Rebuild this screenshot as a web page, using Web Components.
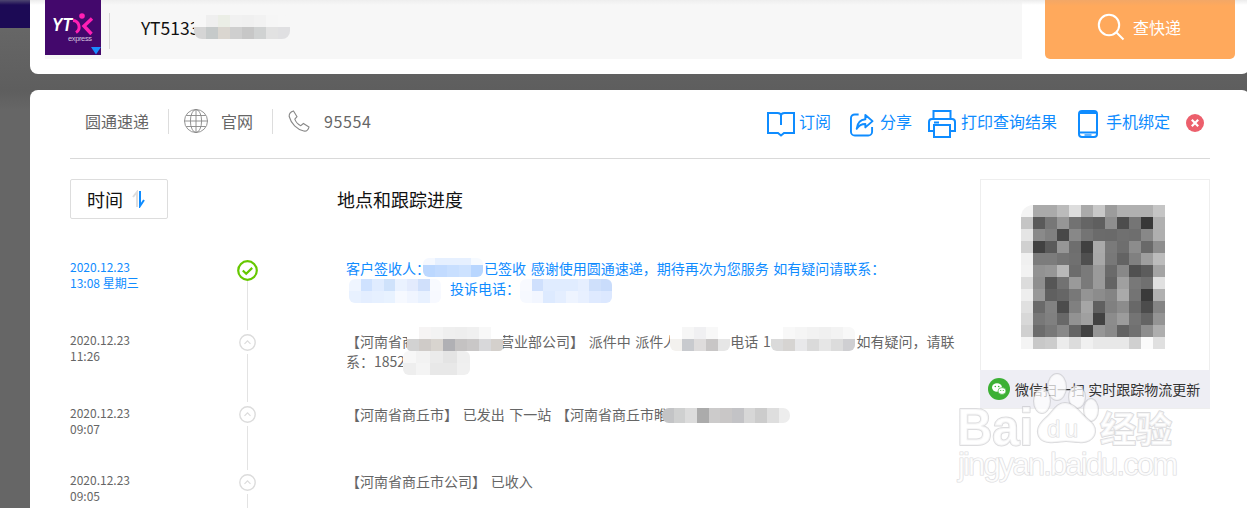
<!doctype html>
<html lang="zh">
<head>
<meta charset="utf-8">
<title>查快递</title>
<style>
  html, body { margin: 0; padding: 0; height: 100%; overflow: hidden; background: #666; }
</style>
</head>
<body>
<yt-app></yt-app>
<script>
const font = `"Noto Sans CJK SC", "Noto Sans", sans-serif`;
const BLUE = "#0f8cff";

class Blur extends HTMLElement {
  constructor() {
    super();
    this.attachShadow({ mode: "open" });
  }

  connectedCallback() {
    const cols = +this.getAttribute("cols");
    const cell = this.getAttribute("cell") || 12;
    const rows = (this.getAttribute("rows") || "12").split(",").map((r) => r + "px").join(" ");
    const cells = this.getAttribute("colors").trim().split(/[\s,]+/)
      .map((c) => `<i style="background:${c}"></i>`).join("");
    this.shadowRoot.innerHTML = `
      <style>
        :host {
          display: inline-block;
          position: relative;
          width: ${this.getAttribute("w") || 0}px;
          height: 0;
          z-index: 1;
        }
        div {
          position: absolute;
          left: ${this.getAttribute("x") || 0}px;
          top: ${this.getAttribute("y") || 0}px;
          display: grid;
          grid-template-columns: repeat(${cols}, ${cell}px);
          grid-template-rows: ${rows};
          border-radius: ${this.getAttribute("r") || 6}px;
          overflow: hidden;
        }
        i { display: block; }
      </style>
      <div>${cells}</div>
    `;
  }
}

class Search extends HTMLElement {
  constructor() {
    super();
    this.attachShadow({ mode: "open" });
    this.shadowRoot.innerHTML = `
      <style>
        :host {
          display: flex;
          box-sizing: border-box;
          height: 74px;
          padding: 0 15px 15px 15px;
          gap: 23px;
          border-radius: 0 0 8px 8px;
          background: linear-gradient(#ececec, #fff 5px);
          font-family: ${font};
        }
        .field {
          flex: 1;
          display: flex;
          height: 59px;
          background: linear-gradient(#eee, #f7f7f7 5px);
        }
        .logo { width: 56px; height: 55px; flex: none; display: block; }
        .sep { width: 1px; height: 36px; margin: 13px 0 0 8px; background: #d8d8d8; }
        .code {
          margin: 15px 0 0 31px;
          font-size: 17.5px;
          line-height: 25px;
          color: #111;
          white-space: nowrap;
        }
        button {
          all: unset;
          display: flex;
          align-items: center;
          justify-content: center;
          gap: 8px;
          box-sizing: border-box;
          width: 190px;
          height: 59px;
          padding: 0 2px 5px 0;
          border-radius: 0 0 5px 5px;
          background: linear-gradient(#f3a766, #ffa95c 6px);
          color: #fff;
          font-size: 16px;
        }
      </style>
      <div class="field">
        <svg class="logo" viewBox="0 0 56 55">
          <rect width="56" height="55" fill="#43086c"/>
          <text x="7" y="31" font-family="Liberation Sans" font-size="18" font-weight="700" font-style="italic" fill="#fff" textLength="20" lengthAdjust="spacingAndGlyphs">YT</text>
          <circle cx="37" cy="16" r="2.800" fill="#ff1fb4"/>
          <path d="M28 20.500a6.500 6.500 0 0 1 3 12" fill="none" stroke="#ff1fb4" stroke-width="3"/>
          <path d="M47 18.500l-8 7.500 7.500 8" fill="none" stroke="#ff1fb4" stroke-width="3.400"/>
          <text x="23" y="40.500" font-family="Liberation Sans" font-size="7.500" fill="#d5c4de" textLength="24">express</text>
          <path d="M46 47h10l-5 7.500z" fill="#1a8cff"/>
        </svg>
        <span class="sep"></span>
        <span class="code">YT5133<yt-blur cols="8" w="0" x="-5" y="-20" rows="12,12" r="8" colors="
          #f7f7f7 #efefef #ebeee6 #f1f1f1 #f0f0f0 #f2f2f2 #f6f6f6 #f7f7f7
          #d5d5d5 #c6caca #dad6d0 #cfcfcf #c7c7c7 #d0d2d2 #e2e2e2 #e0e0e2"></yt-blur></span>
      </div>
      <button>
        <svg width="28" height="28" viewBox="0 0 28 28" fill="none" stroke="#fff" stroke-width="2">
          <circle cx="12" cy="12" r="10.200"/>
          <path d="M19.500 19.500l7 7"/>
        </svg>
        <span>查快递</span>
      </button>
    `;
  }
}

class Action extends HTMLElement {
  constructor() {
    super();
    this.attachShadow({ mode: "open" });
    this.shadowRoot.innerHTML = `
      <style>
        :host {
          display: inline-flex;
          align-items: center;
          gap: var(--gap, 5px);
          margin-left: var(--before, 18px);
          color: ${BLUE};
          font-size: 16px;
          white-space: nowrap;
        }
        slot:not([name]) { display: block; margin-bottom: 4px; }
        ::slotted(svg) { display: block; margin-top: 2px; }
      </style>
      <slot name="icon"></slot><slot></slot>
    `;
  }
}

class Toolbar extends HTMLElement {
  constructor() {
    super();
    this.attachShadow({ mode: "open" });
    this.shadowRoot.innerHTML = `
      <style>
        :host {
          display: flex;
          align-items: center;
          box-sizing: border-box;
          height: 69px;
          padding: 0 6px 6px 15px;
          border-bottom: 1px solid #d9d9d9;
          color: #666;
          font-size: 16px;
          font-family: ${font};
        }
        .sep { width: 1px; height: 25px; background: #ddd; margin: 0 15px 0 19px; }
        svg { display: block; flex: none; }
        .site { margin-left: 13px; }
        .tel { margin-left: 14px; letter-spacing: .6px; }
        .actions { margin: 4px 0 0 auto; display: flex; align-items: center; }
        .close { margin-left: 16px; }
      </style>
      <span>圆通速递</span>
      <span class="sep"></span>
      <svg width="24" height="24" viewBox="0 0 24 24" fill="none" stroke="#888" stroke-width=".9">
        <circle cx="12" cy="12" r="11.500"/>
        <ellipse cx="12" cy="12" rx="5.600" ry="11.500"/>
        <path d="M12 .5v23M.5 12h23M2.200 6.500h19.600M2.200 17.500h19.600"/>
      </svg>
      <span class="site">官网</span>
      <span class="sep"></span>
      <svg width="22" height="22" viewBox="0 0 22 22" fill="none" stroke="#888" stroke-width="1.100">
        <path d="M5.500 1L9 6.600 6.800 9.200c1 3 3 5.200 6 6.500l2.600-2.200 5.600 3.600c-.8 2.700-2.800 4.400-5.200 3.900C9 19.400 3 13.500 1.200 6.500 1 4 2.800 1.800 5.500 1z"/>
      </svg>
      <span class="tel">95554</span>
      <div class="actions">
        <yt-action style="--gap:4px;--before:0">
          <svg slot="icon" width="28" height="26" viewBox="0 0 28 26" fill="none" stroke="${BLUE}" stroke-width="2">
            <path d="M1 2h9.500C12.500 2 14 2.800 14 4.500 14 2.800 15.500 2 17.500 2H27v20H17l-3 2.500L11 22H1z"/>
            <path d="M14 2v12"/>
          </svg>
          订阅
        </yt-action>
        <yt-action style="--gap:6px;--before:19px">
          <svg slot="icon" width="24" height="25" viewBox="0 0 25 25" fill="none" stroke="${BLUE}" stroke-width="2">
            <path d="M9 2H5a4 4 0 0 0-4 4v14a4 4 0 0 0 4 4h14a4 4 0 0 0 4-4v-5"/>
            <path d="M16 2.500l7.500 6.500-7.500 6.500V12c-4 0-7 1.800-9 5 .5-5.500 3.800-9.500 9-10z" stroke-linejoin="round"/>
          </svg>
          分享
        </yt-action>
        <yt-action style="--gap:5px;--before:16px">
          <svg slot="icon" width="28" height="28" viewBox="0 0 28 28" fill="none" stroke="${BLUE}" stroke-width="2">
            <path d="M5.500 9V1h17v8"/>
            <path d="M6 21H1v-9a3 3 0 0 1 3-3h20a3 3 0 0 1 3 3v9h-5"/>
            <rect x="6" y="15" width="16" height="12"/>
            <path d="M6 12.500h5"/>
          </svg>
          打印查询结果
        </yt-action>
        <yt-action style="--gap:8px;--before:21px">
          <svg slot="icon" width="20" height="28" viewBox="0 0 20 28" fill="none" stroke="${BLUE}" stroke-width="2">
            <rect x="1" y="1" width="18" height="26" rx="3"/>
            <path d="M1 2.500h18" stroke-width="3"/>
            <path d="M1 22.500h18"/>
            <path d="M6.500 25h7" stroke-width="1.300"/>
          </svg>
          手机绑定
        </yt-action>
        <svg class="close" width="18" height="18" viewBox="0 0 18 18">
          <circle cx="9" cy="9" r="9" fill="#ec5f6c"/>
          <path d="M5.800 5.800l6.400 6.400M12.200 5.800l-6.400 6.400" stroke="#fff" stroke-width="2.200"/>
        </svg>
      </div>
    `;
  }
}

class Step extends HTMLElement {
  constructor() {
    super();
    this.attachShadow({ mode: "open" });
  }

  connectedCallback() {
    const active = this.hasAttribute("active");
    const icon = active
      ? `<svg width="21" height="21" viewBox="0 0 21 21" fill="none" stroke="#66c800">
           <circle cx="10.500" cy="10.500" r="9.300" stroke-width="2.200"/>
           <path d="M5.800 10.500l3.400 3.200 6-5.800" stroke-width="2.200"/>
         </svg>`
      : `<svg width="17" height="17" viewBox="0 0 17 17" fill="none" stroke="#dcdcdc">
           <circle cx="8.500" cy="8.500" r="7.700" stroke-width="1.400"/>
           <path d="M5.500 9.800l3-3 3 3" stroke-width="1.200"/>
         </svg>`;
    this.shadowRoot.innerHTML = `
      <style>
        :host {
          display: grid;
          grid-template-columns: 168px 20px 698px;
          height: var(--h, 72px);
          color: #666;
          font-size: 12px;
          line-height: 16px;
        }
        :host([active]) { color: ${BLUE}; }
        .when { margin-top: var(--up, -2px); white-space: pre-line; }
        .node { display: flex; flex-direction: column; align-items: center; }
        .node svg { display: block; flex: none; margin-right: 1px; }
        .node i { flex: 1; width: 1px; margin: 3px 1px 4px 0; background: #e3e3e3; }
        :host([active]) .node i { margin: 0 1px 4px 0; }
        .text {
          margin: calc(var(--up, -2px) - 1px) 0 0 88px;
          font-size: 14px;
          line-height: 20px;
          word-spacing: 1.500px;
          white-space: nowrap;
        }
      </style>
      <div class="when">${this.getAttribute("date")}\n${this.getAttribute("time")}</div>
      <div class="node">${icon}<i></i></div>
      <div class="text"><slot></slot></div>
    `;
  }
}

class Qr extends HTMLElement {
  constructor() {
    super();
    this.attachShadow({ mode: "open" });
    this.shadowRoot.innerHTML = `
      <style>
        :host {
          display: block;
          box-sizing: border-box;
          width: 230px;
          height: 230px;
          border: 1px solid #eee;
          font-family: ${font};
        }
        .code { height: 190px; padding: 25px 0 0 40px; box-sizing: border-box; }
        .code slot { display: block; }
        .foot {
          display: flex;
          align-items: center;
          gap: 5px;
          height: 38px;
          padding-left: 8px;
          margin: 0 -1px -1px;
          background: #eeeef4;
          color: #333;
          font-size: 14px;
          white-space: nowrap;
        }
        svg { display: block; flex: none; }
      </style>
      <div class="code"><slot></slot></div>
      <div class="foot">
        <svg width="22" height="22" viewBox="0 0 22 22">
          <circle cx="11" cy="11" r="11" fill="#3cb034"/>
          <ellipse cx="9" cy="9.500" rx="5" ry="4.200" fill="#fff"/>
          <ellipse cx="14" cy="13" rx="4" ry="3.400" fill="#fff" stroke="#3cb034" stroke-width=".7"/>
          <circle cx="7.300" cy="8.500" r=".8" fill="#3cb034"/>
          <circle cx="10.700" cy="8.500" r=".8" fill="#3cb034"/>
          <circle cx="12.700" cy="12.500" r=".6" fill="#3cb034"/>
          <circle cx="15.300" cy="12.500" r=".6" fill="#3cb034"/>
        </svg>
        <span>微信扫一扫 实时跟踪物流更新</span>
      </div>
    `;
  }
}

class Watermark extends HTMLElement {
  constructor() {
    super();
    this.attachShadow({ mode: "open" });
    this.shadowRoot.innerHTML = `
      <style>
        :host {
          position: absolute;
          left: 950px;
          top: 370px;
          z-index: 5;
          pointer-events: none;
        }
        svg { display: block; }
        text, .paw {
          fill: rgba(255, 255, 255, .72);
          stroke: rgba(185, 185, 190, .5);
          stroke-width: 2;
          stroke-linejoin: round;
          paint-order: stroke;
        }
        .thin { stroke-width: 1.200; }
      </style>
      <svg width="240" height="120" viewBox="0 0 240 120">
        <text x="7" y="75" font-family="Liberation Sans" font-size="52" font-weight="700" textLength="76" lengthAdjust="spacingAndGlyphs">Bai</text>
        <ellipse class="paw" cx="107" cy="17" rx="9" ry="13"/>
        <ellipse class="paw" cx="92" cy="31" rx="8" ry="12"/>
        <ellipse class="paw" cx="127" cy="27" rx="8" ry="11"/>
        <ellipse class="paw" cx="141" cy="40" rx="7" ry="11"/>
        <path class="paw" d="M115 33c-8 0-11 7-16 12s-12 10-11 18c1 8 9 10 16 9 5 0 8-1 12-1s8 1 13 1c7 1 15-2 16-10 1-8-7-12-12-17s-10-12-18-12z"/>
        <text class="thin" x="97" y="67" font-family="Liberation Sans" font-size="24" textLength="31">du</text>
        <text x="150" y="73" font-family="Noto Sans CJK SC" font-size="36" font-weight="700">经验</text>
        <text class="thin" x="8" y="105" font-family="Liberation Sans" font-size="31" textLength="220">jingyan.baidu.com</text>
      </svg>
    `;
  }
}

class App extends HTMLElement {
  constructor() {
    super();
    this.attachShadow({ mode: "open" });
    this.shadowRoot.innerHTML = `
      <style>
        :host {
          display: grid;
          grid-template-columns: 30px 1220px;
          width: 1247px;
          height: 508px;
          position: relative;
          overflow: hidden;
          background: linear-gradient(#6a6a6a, #5e5e5e 90px, #666 110px);
          font-family: ${font};
        }
        .corner { height: 28px; background: linear-gradient(#4d4670, #1c0a55 5px); }
        .cards { display: flex; flex-direction: column; gap: 16px; height: 508px; }
        .card {
          flex: 1;
          box-sizing: border-box;
          padding: 0 40px;
          width: 1220px;
          border-radius: 8px 8px 0 0;
          background: #fff;
        }
        .inner { width: 1140px; }
        .main { display: grid; grid-template-columns: 1fr 230px; padding-top: 20px; }
        .head { display: flex; align-items: center; height: 40px; margin-bottom: 41px; }
        .sort {
          display: flex;
          align-items: center;
          gap: 9px;
          box-sizing: border-box;
          width: 98px;
          height: 40px;
          padding-left: 16px;
          border: 1px solid #ddd;
          border-radius: 2px;
          color: #111;
          font-size: 18px;
        }
        .sort svg { display: block; }
        .title { margin-left: 169px; font-size: 18px; color: #111; }
        .hi { color: ${BLUE}; }
        .qr {
          display: grid;
          grid-template-columns: repeat(12, 12px);
          grid-auto-rows: 12px;
          border-radius: 12px 8px 0 0;
          overflow: hidden;
        }
      </style>
      <div class="corner"></div>
      <div class="cards">
        <yt-search></yt-search>
        <div class="card">
          <div class="inner">
            <yt-toolbar></yt-toolbar>
            <div class="main">
              <div>
                <div class="head">
                  <div class="sort">
                    <span>时间</span>
                    <svg width="13" height="18" viewBox="0 0 13 18" fill="none" stroke-width="2">
                      <path d="M5 17V2L1 7" stroke="#ddd"/>
                      <path d="M8 1v15l4-6" stroke="${BLUE}"/>
                    </svg>
                  </div>
                  <span class="title">地点和跟踪进度</span>
                </div>
                <yt-step active date="2020.12.23" time="13:08 星期三" style="--h:74px;--up:-1px">
                  <span class="hi">客户签收人&#xFF1A;<yt-blur cols="5" w="54" x="-7" y="-16" rows="7,12" colors="
                    #f4f8ff #e6f0ff #e6f0ff #e6f0ff #f6faff
                    #bcd8ff #c2dbff #c8dfff #cde2ff #b8d6ff"></yt-blur>已签收 感谢使用圆通速递&#xFF0C;期待再次为您服务 如有疑问请联系&#xFF1A;<br><yt-blur cols="8" w="104" x="3" y="-15" rows="12,12" cell="11.500" colors="
                    #eff5ff #cfe2ff #e0ecff #cfe2fb #eaf2ff #e3ebfd #d0e0fb #f8faff
                    #e8f1ff #e4eeff #e6f0ff #e8f2ff #f6f9ff #f0f5ff #e8f1ff #f7f9ff"></yt-blur>投诉电话&#xFF1A;<yt-blur cols="8" w="0" x="0" y="-15" rows="12,12" cell="11.500" colors="
                    #f8faff #cfe0fd #e0ecff #e0ecff #e0ecff #e6efff #cfe0fb #c9dcfb
                    #f6f9ff #f2f6ff #ddeaff #e4eeff #eef4ff #e8f0ff #dfeaff #dce8ff"></yt-blur></span>
                </yt-step>
                <yt-step date="2020.12.23" time="11:26" style="--h:72px">
                  【河南省商<yt-blur cols="8" w="84" x="-9" y="-20" rows="12,12" r="4" colors="
                    #fff #f6f4f4 #f3f3f3 #efefef #eee #f0f0f0 #f8f8f8 #fff
                    #d2d2d2 #cfcbc8 #d8d4cf #b0b0b4 #c4c2c2 #c9c7c7 #d8d8da #d4d0cc"></yt-blur>营业部公司】 派件中 派件人<yt-blur cols="5" w="53" x="-7" y="-20" rows="12,12" colors="
                    #fff #f6f6f6 #f0f0f2 #f8f8f8 #fff
                    #f3f1ee #c8cace #dedcdc #c8c6c6 #e6e6e6"></yt-blur>电话 18<yt-blur cols="7" w="78" x="-7" y="-20" rows="12,12" colors="
                    #fff #f8f8f8 #f5f5f5 #f2f2f2 #f0f0f0 #f3f3f3 #f8f8f8
                    #dadada #d6d4d2 #e8e8ea #dadada #e6e6e6 #dcdcdc #cfcfd2"></yt-blur>如有疑问&#xFF0C;请联<br>系&#xFF1A;1852<yt-blur cols="5" w="0" x="-2" y="-16" rows="12,12" cell="13.400" colors="
                    #f7f7f7 #f2f2f2 #ebebeb #e4e4e4 #efefef
                    #eee #f4f4f4 #e8e8e8 #e8e8e8 #f0f0f0"></yt-blur>
                </yt-step>
                <yt-step date="2020.12.23" time="09:07" style="--h:68px;--up:-1px">
                  【河南省商丘市】 已发出 下一站 【河南省商丘市睢<yt-blur cols="11" w="0" x="-6" y="-12" r="7" rows="15" cell="11.700" colors="
                    #c3c4c6 #cfd0d0 #dcdcdc #ababab #cccbcb #c9c7c7 #c3c3c6 #d7d7d7 #ccc #dedede #ededed"></yt-blur>
                </yt-step>
                <yt-step date="2020.12.23" time="09:05">
                  【河南省商丘市公司】 已收入
                </yt-step>
              </div>
              <div>
                <yt-qr><div class="qr" id="code"></div></yt-qr>
              </div>
            </div>
          </div>
        </div>
      </div>
      <yt-watermark></yt-watermark>
    `;
    const colors = `
      #f4f4f4 #aaa #aaa #bbb #ddd #aaa #c8c8c8 #9c9c9c #b0b0b0 #b0b0b0 #b0b0b0 #c5c5c5
      #c5c5c5 #5a5a5a #777 #969696 #727272 #656565 #5f5f5f #8e8e8e #4d4d4d #757575 #383838 #b0b0b0
      #e5e5e5 #8a8a8a #808080 #484848 #888 #747474 #6b6b6b #6a6a6a #707070 #6e6e6e #888 #afafaf
      #d0d0d0 #414141 #5a5a5a #969696 #6e6e6e #404040 #aaa #7a7a7a #6e6e6e #8c8c8c #696969 #8e8e8e
      #f0f0f0 #7c7c7c #7c7c7c #747474 #707070 #4f4f4f #a8a8a8 #787878 #636363 #808080 #9e9e9e #bcbcbc
      #f2f2f2 #929292 #969696 #b8b8b8 #6c6c6c #7a7a7a #9a9a9a #6a6a6a #888 #505050 #5c5c5c #a4a4a4
      #dcdcdc #8e8e8e #565656 #727272 #9a9a9a #7a7a7a #9a9a9a #646464 #a0a0a0 #787878 #707070 #e0e0e0
      #eee #989898 #606060 #666 #787878 #949494 #8c8c8c #848484 #aaa #747474 #3a3a3a #b0b0b0
      #e0e0e0 #6a6a6a #828282 #4c4c4c #808080 #a6a6a6 #606060 #808080 #8c8c8c #686868 #4c4c4c #848484
      #d8d8d8 #787878 #808080 #686868 #929292 #a0a0a0 #424242 #8c8c8c #9c9c9c #747474 #646464 #949494
      #d0d0d0 #6c6c6c #787878 #888 #646464 #424242 #969696 #8a8a8a #626262 #707070 #8e8e8e #aeaeae
      #f4f4f4 #c8c8c8 #ccc #ececec #dcdcdc #f0f0f0 #e8e8e8 #e8e8e8 #e8e8e8 #d0d0d0 #fbfbfb #e0e0e0
    `.trim().split(/\s+/);
    this.shadowRoot.getElementById("code").innerHTML = colors
      .map((c) => `<span style="background:${c}"></span>`).join("");
  }
}

customElements.define("yt-blur", Blur);
customElements.define("yt-search", Search);
customElements.define("yt-action", Action);
customElements.define("yt-toolbar", Toolbar);
customElements.define("yt-step", Step);
customElements.define("yt-qr", Qr);
customElements.define("yt-watermark", Watermark);
customElements.define("yt-app", App);
</script>
</body>
</html>
